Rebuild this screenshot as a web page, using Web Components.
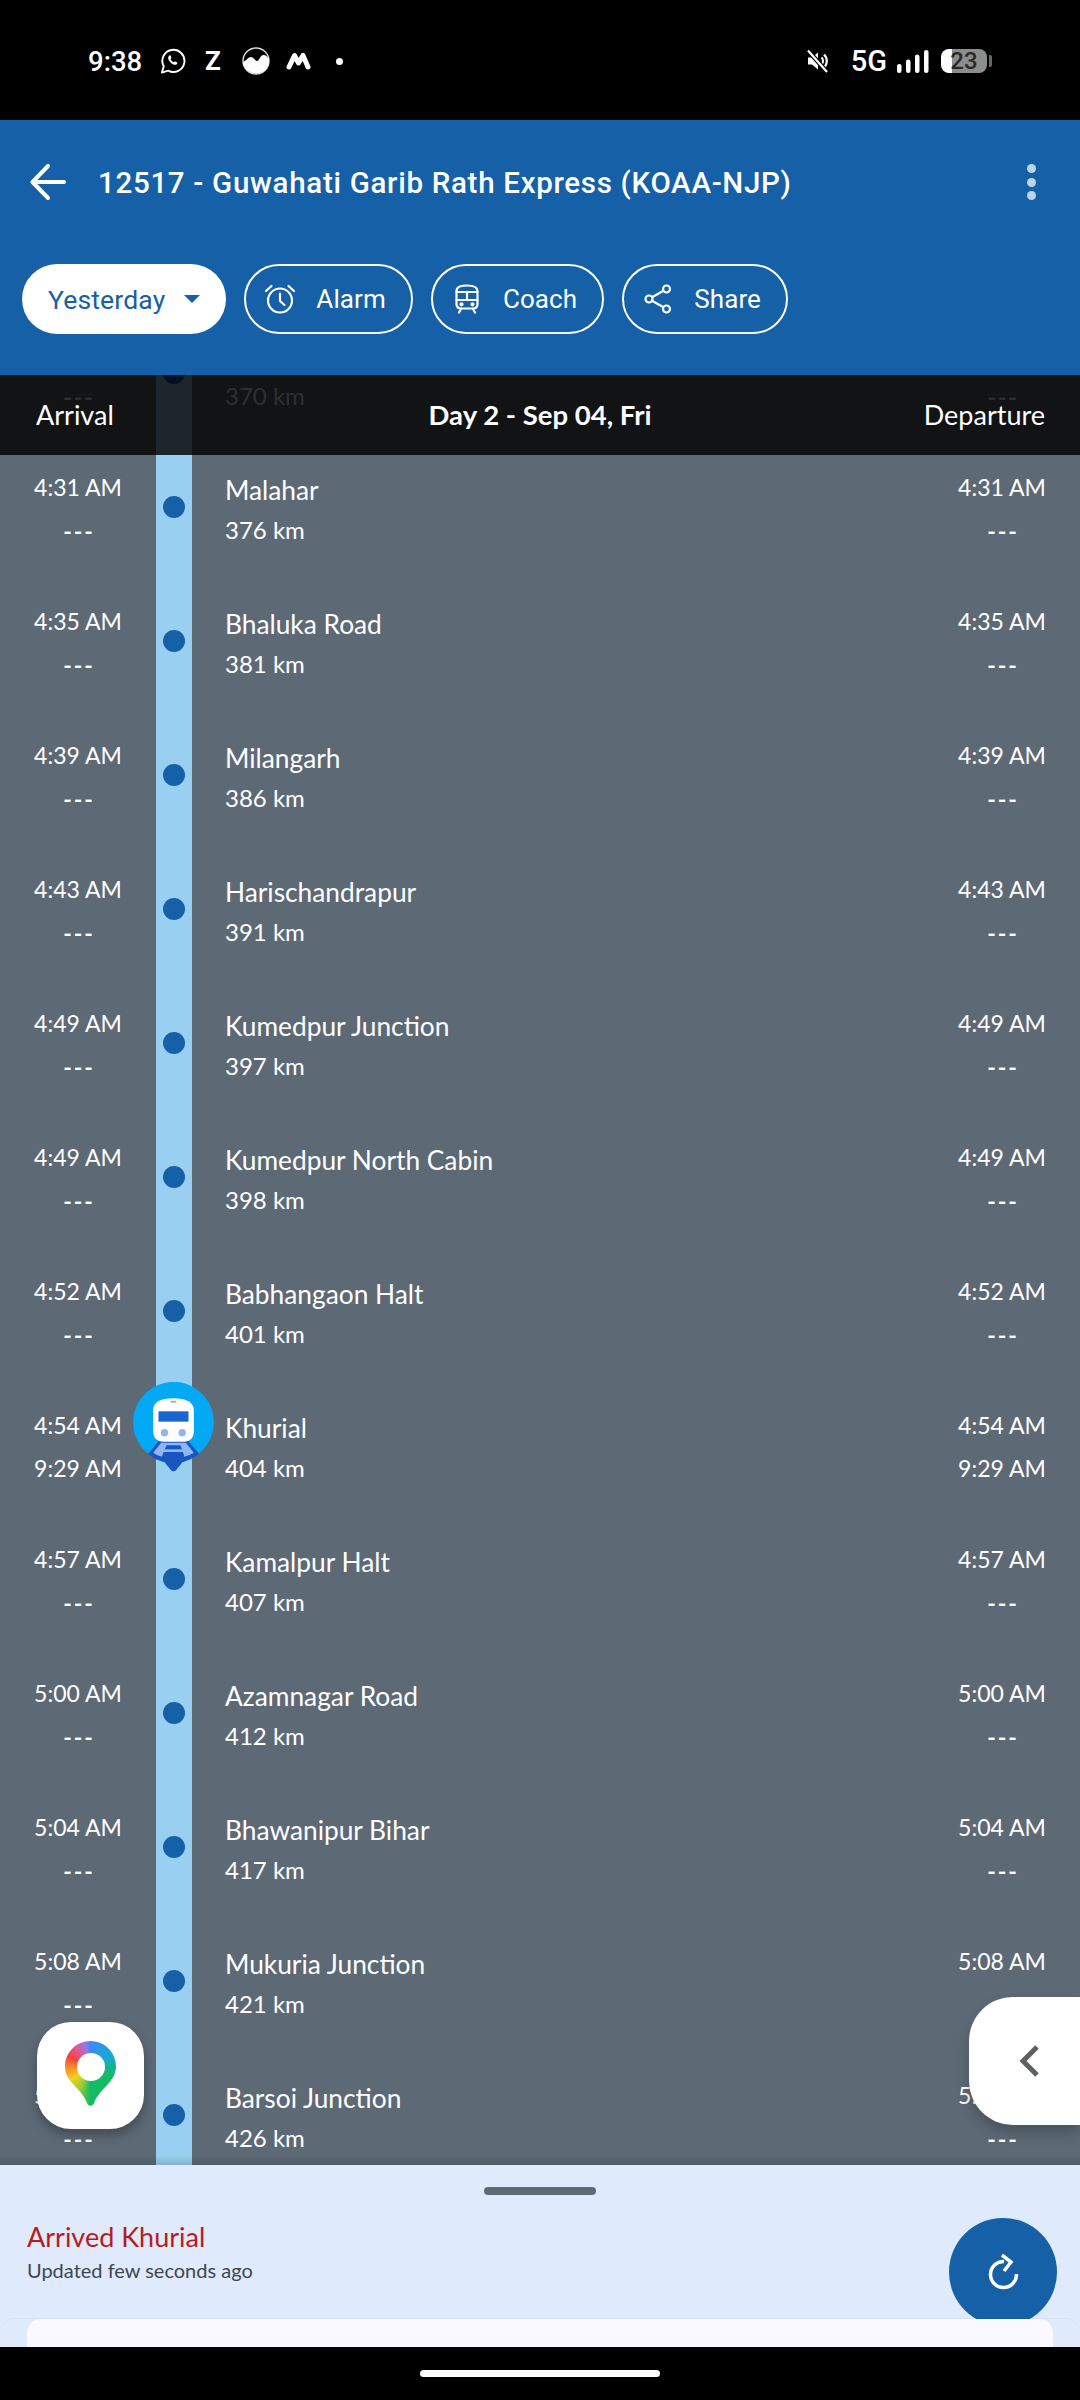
<!DOCTYPE html>
<html>
<head>
<meta charset="utf-8">
<title>Train status</title>
<style>
  html, body { margin: 0; padding: 0; height: 100%; background: #000; }
  body {
    width: 1080px;
    height: 2400px;
    overflow: hidden;
    display: flex;
    flex-direction: column;
    font-family: "Lato", "Open Sans", sans-serif;
    color: #fff;
  }
</style>
</head>
<body>
<status-bar></status-bar>
<train-header title-text="12517 - Guwahati Garib Rath Express (KOAA-NJP)">
  <day-select>Yesterday</day-select>
  <header-chip icon="alarm">Alarm</header-chip>
  <header-chip icon="coach">Coach</header-chip>
  <header-chip icon="share">Share</header-chip>
</train-header>
<route-view>
  <stop-row km="370 km"></stop-row>
  <stop-row time="4:31 AM" name="Malahar" km="376 km"></stop-row>
  <stop-row time="4:35 AM" name="Bhaluka Road" km="381 km"></stop-row>
  <stop-row time="4:39 AM" name="Milangarh" km="386 km"></stop-row>
  <stop-row time="4:43 AM" name="Harischandrapur" km="391 km"></stop-row>
  <stop-row time="4:49 AM" name="Kumedpur Junction" km="397 km"></stop-row>
  <stop-row time="4:49 AM" name="Kumedpur North Cabin" km="398 km"></stop-row>
  <stop-row time="4:52 AM" name="Babhangaon Halt" km="401 km"></stop-row>
  <stop-row time="4:54 AM" actual="9:29 AM" name="Khurial" km="404 km" current></stop-row>
  <stop-row time="4:57 AM" name="Kamalpur Halt" km="407 km"></stop-row>
  <stop-row time="5:00 AM" name="Azamnagar Road" km="412 km"></stop-row>
  <stop-row time="5:04 AM" name="Bhawanipur Bihar" km="417 km"></stop-row>
  <stop-row time="5:08 AM" name="Mukuria Junction" km="421 km"></stop-row>
  <stop-row time="5:12 AM" name="Barsoi Junction" km="426 km"></stop-row>
</route-view>
<status-sheet heading="Arrived Khurial" note="Updated few seconds ago"></status-sheet>
<nav-bar></nav-bar>

<script>
const ICONS = {
  alarm: `<svg width="32" height="30" viewBox="0 0 32 30" fill="none" stroke="#fff" stroke-width="2.2" stroke-linecap="round" stroke-linejoin="round">
    <circle cx="16" cy="16.500" r="12"/><path d="M16 9.500v7.500l4.500 4"/><path d="M2 7 7.500 2M30 7 24.500 2"/></svg>`,
  coach: `<svg width="26" height="30" viewBox="0 0 26 30" fill="none" stroke="#fff" stroke-width="2.2" stroke-linecap="round" stroke-linejoin="round">
    <path d="M2.500 7c0-4 4-5.500 10.500-5.500S23.500 3 23.500 7v13c0 3-2 4.500-4.500 4.500H7c-2.500 0-4.500-1.500-4.500-4.500z"/><path d="M2.500 8h21M2.500 16h21M13 8v8"/><path d="M7 25 5 28.500M19 25l2 3.500"/>
    <circle cx="7.500" cy="20.300" r="1" fill="#fff"/><circle cx="18.500" cy="20.300" r="1" fill="#fff"/></svg>`,
  share: `<svg width="28" height="30" viewBox="0 0 28 30" fill="none" stroke="#fff" stroke-width="2.200">
    <circle cx="22.500" cy="5" r="3.500"/><circle cx="5" cy="15" r="3.500"/><circle cx="22.500" cy="25" r="3.500"/><path d="M8 13.300 19.500 6.700M8 16.700l11.500 6.600"/></svg>`
};

const STATUS_TEMPLATE = document.createElement('template');

STATUS_TEMPLATE.innerHTML = `
  <style>
    :host {
      display: flex;
      align-items: center;
      flex: none;
      height: 120px;
      padding: 2px 88px 0 88px;
      box-sizing: border-box;
      background: #000;
      color: #fff;
      font-family: "Roboto", sans-serif;
      font-weight: 500;
    }
    .side { display: flex; align-items: center; }
    .left { flex: 1; }
    .time { font-size: 27.500px; width: 72px; }
    .z { font-size: 26px; width: 37px; margin-left: 19px; font-weight: 700; }
    .dot { width: 7px; height: 7px; border-radius: 50%; background: #fff; margin-left: 25px; }
    .five { font-size: 29px; margin: 0 10px 0 21px; }
    .battery { display: flex; align-items: center; gap: 2px; margin-left: 12px; }
    .cell {
      width: 46px;
      height: 24px;
      border-radius: 8px;
      background: linear-gradient(90deg, #fff 0 11px, #8d8d8d 11px);
      color: #2a2a2a;
      font-size: 24px;
      line-height: 24px;
      text-align: center;
    }
    .nub { width: 3px; height: 12px; border-radius: 0 2px 2px 0; background: #666; }
    svg { display: block; }
  </style>
  <div class="side left">
    <span class="time">9:38</span>
    <svg width="26" height="26" viewBox="0 0 27 27" fill="none" stroke="#fff" stroke-width="2">
      <path d="M2 25.500l1.900-6.500A11.500 11.500 0 1 1 8.500 23.500z" stroke-linejoin="round"/>
      <path d="M9.500 8c-1.800 1.500-1.200 4 1 6.500s5 3.800 6.800 2.500c.8-.6.800-1.600.5-2l-2.300-1.200-1.200 1.200c-1.200-.4-3-2.200-3.400-3.500l1.100-1.200-1.100-2.400c-.5-.4-1.100-.3-1.400.1z" fill="#fff" stroke="none"/>
    </svg>
    <span class="z">Z</span>
    <svg width="28" height="28" viewBox="0 0 28 28" style="margin-right:16px">
      <circle cx="14" cy="14" r="13" fill="#000" stroke="#ddd" stroke-width="1.400"/>
      <path d="M1 15c3-1 5-5 8-5s4 4 6 4 3-5 6-6c2-.5 4 1 6 4A13 13 0 0 1 1 15z" fill="#fff"/>
    </svg>
    <svg width="25" height="18" viewBox="0 0 25 18" fill="none" stroke="#fff" stroke-linecap="round" stroke-linejoin="round">
      <path d="M3 15 8.500 3.500 12.500 11 17 3.500 22 15" stroke-width="5"/>
    </svg>
    <span class="dot"></span>
  </div>
  <div class="side">
    <svg width="24" height="24" viewBox="0 0 24 24" fill="none">
      <path d="M2 8.500h4l6-5v17l-6-5H2z" fill="#fff"/>
      <path d="M15.500 8.500a5 5 0 0 1 0 7M18 5.500a9 9 0 0 1 0 13" stroke="#fff" stroke-width="2.200"/>
      <path d="M2 1.500 21 23" stroke="#000" stroke-width="4.500"/><path d="M2 1.500 21 23" stroke="#fff" stroke-width="2.200"/>
    </svg>
    <span class="five">5G</span>
    <svg width="32" height="23" viewBox="0 0 32 23" fill="#fff">
      <rect x="0" y="14" width="4.500" height="9" rx="2.250"/><rect x="9" y="9.500" width="4.500" height="13.500" rx="2.250"/>
      <rect x="18" y="4.500" width="4.500" height="18.500" rx="2.250"/><rect x="27" y="0" width="4.500" height="23" rx="2.250"/>
    </svg>
    <span class="battery"><span class="cell">23</span><span class="nub"></span></span>
  </div>
`;

class StatusBar extends HTMLElement {
  constructor() {
    super();
    this.attachShadow({ mode: 'open' }).append(STATUS_TEMPLATE.content.cloneNode(true));
  }
}

const HEADER_TEMPLATE = document.createElement('template');

HEADER_TEMPLATE.innerHTML = `
  <style>
    :host {
      display: block;
      flex: none;
      height: 255px;
      background: #1560a6;
      color: #fff;
      font-family: "Roboto", sans-serif;
    }
    .top {
      display: flex;
      align-items: center;
      height: 124px;
      padding: 0 44px 0 30px;
      box-sizing: border-box;
    }
    .title {
      flex: 1;
      margin: 2px 0 0 32px;
      font-size: 29.500px;
      font-weight: 500;
      letter-spacing: .7px;
      white-space: nowrap;
    }
    .more { display: flex; flex-direction: column; gap: 4.500px; }
    .more i { width: 9px; height: 9px; border-radius: 50%; background: #bdd4e8; }
    .chips { display: flex; gap: 18px; padding: 20px 22px 0; }
    svg { display: block; }
  </style>
  <div class="top">
    <svg width="36" height="36" viewBox="0 0 36 36" fill="none" stroke="#fff" stroke-width="4" stroke-linecap="round" stroke-linejoin="round">
      <path d="M34 18H3M18 2 2.500 18 18 34"/>
    </svg>
    <div class="title"></div>
    <div class="more"><i></i><i></i><i></i></div>
  </div>
  <div class="chips"><slot></slot></div>
`;

class TrainHeader extends HTMLElement {
  constructor() {
    super();
    this.attachShadow({ mode: 'open' }).append(HEADER_TEMPLATE.content.cloneNode(true));
  }

  connectedCallback() {
    this.shadowRoot.querySelector('.title').textContent = this.getAttribute('title-text');
  }
}

const SELECT_TEMPLATE = document.createElement('template');

SELECT_TEMPLATE.innerHTML = `
  <style>
    :host {
      display: flex;
      align-items: center;
      gap: 19px;
      height: 70px;
      padding: 0 26px;
      border-radius: 35px;
      background: #fff;
      color: #1560a6;
      font-size: 26.500px;
      letter-spacing: .15px;
    }
    .caret {
      width: 0;
      height: 0;
      border-left: 8px solid transparent;
      border-right: 8px solid transparent;
      border-top: 8px solid #1560a6;
    }
  </style>
  <slot></slot><span class="caret"></span>
`;

class DaySelect extends HTMLElement {
  constructor() {
    super();
    this.attachShadow({ mode: 'open' }).append(SELECT_TEMPLATE.content.cloneNode(true));
  }
}

const CHIP_TEMPLATE = document.createElement('template');

CHIP_TEMPLATE.innerHTML = `
  <style>
    :host {
      display: flex;
      align-items: center;
      gap: 20px;
      height: 70px;
      padding: 0 25px 0 18px;
      box-sizing: border-box;
      border: 2px solid #fff;
      border-radius: 35px;
      color: #fff;
      font-size: 26px;
      letter-spacing: .1px;
    }
    .icon { display: flex; justify-content: center; width: 32px; }
  </style>
  <span class="icon"></span><slot></slot>
`;

class HeaderChip extends HTMLElement {
  constructor() {
    super();
    this.attachShadow({ mode: 'open' }).append(CHIP_TEMPLATE.content.cloneNode(true));
  }

  connectedCallback() {
    this.shadowRoot.querySelector('.icon').innerHTML = ICONS[this.getAttribute('icon')];
  }
}

const ROUTE_TEMPLATE = document.createElement('template');

ROUTE_TEMPLATE.innerHTML = `
  <style>
    :host {
      display: block;
      flex: 1;
      min-height: 0;
      position: relative;
      overflow: hidden;
      background: #5d6a76;
    }
    .list { margin-top: -54px; }
    .columns {
      position: absolute;
      top: 0;
      left: 0;
      right: 0;
      height: 80px;
      padding-bottom: 2px;
      box-sizing: border-box;
      display: flex;
      align-items: center;
      justify-content: space-between;
      padding-left: 36px;
      padding-right: 35px;
      background: rgb(0 0 0 / 82%);
      color: #fff;
      font-size: 27px;
    }
    .day {
      position: absolute;
      left: 0;
      right: 0;
      text-align: center;
      font-weight: 700;
      font-size: 27.500px;
    }
    .shade {
      position: absolute;
      left: 0;
      right: 0;
      bottom: 0;
      height: 10px;
      background: linear-gradient(rgb(0 0 0 / 0%), rgb(0 0 0 / 14%));
    }
    maps-button, side-tab { position: absolute; }
    maps-button { left: 37px; bottom: 36px; }
    side-tab { right: 0; bottom: 40px; }
  </style>
  <div class="list"><slot></slot></div>
  <div class="columns">
    <span>Arrival</span>
    <span class="day">Day 2 - Sep 04, Fri</span>
    <span>Departure</span>
  </div>
  <div class="shade"></div>
  <maps-button></maps-button>
  <side-tab></side-tab>
`;

class RouteView extends HTMLElement {
  constructor() {
    super();
    this.attachShadow({ mode: 'open' }).append(ROUTE_TEMPLATE.content.cloneNode(true));
  }
}

const ROW_TEMPLATE = document.createElement('template');

ROW_TEMPLATE.innerHTML = `
  <style>
    :host {
      display: grid;
      grid-template-columns: 156px 36px 1fr 156px;
      height: 134px;
      color: #fff;
    }
    .times {
      display: flex;
      flex-direction: column;
      align-items: center;
      gap: 15px;
      padding-top: 18px;
      font-size: 23px;
      line-height: 28px;
    }
    .t { min-height: 28px; }
    .rail { position: relative; background: #99cff0; }
    .dot {
      position: absolute;
      left: 7px;
      top: 41px;
      width: 22px;
      height: 22px;
      border-radius: 50%;
      background: #1560a6;
    }
    .pin { position: absolute; left: -23px; top: -11px; z-index: 1; display: none; }
    :host([current]) .pin { display: block; }
    :host([current]) .dot { display: none; }
    .stop { padding: 18px 0 0 33px; }
    .name { min-height: 34px; font-size: 26.300px; line-height: 34px; }
    .km { font-size: 24px; line-height: 28px; margin-top: 9px; }
    .none { letter-spacing: 2px; font-weight: 700; margin-right: -2px; padding-top: 1px; }
  </style>
  <div class="times"><span class="t"></span><span class="a"></span></div>
  <div class="rail">
    <span class="dot"></span>
    <svg class="pin" width="81" height="90" viewBox="100 66 242 270">
      <path d="M100 187a121 121 0 1 1 198 93c-18 14-36 22-50 26l-20 25c-4 4-10 4-14 0l-20-25c-16-4-34-12-50-26a121 121 0 0 1-44-93z" fill="#03a9f4"/>
      <path d="M145 282l32-40h88l33 40c-22 16-42 22-50 24l-20 25c-4 4-10 4-14 0l-20-25c-10-2-30-8-49-24z" fill="#1a56c0"/>
      <path d="M160 278l24-30h74l24 30c-10 6-20 9-28 12l-12-34h-42l-14 34c-8-3-18-6-26-12z" fill="#8fb5f2"/>
      <path d="M188 268h66v8h-66z" fill="#8fb5f2"/>
      <path d="M160 150c0-22 20-35 60-35s62 13 62 35v64c0 20-12 31-30 31h-62c-18 0-30-11-30-31z" fill="#fff"/>
      <rect x="211" y="122" width="19" height="6" rx="3" fill="#8fb5f2"/>
      <rect x="176" y="154" width="90" height="31" fill="#1a66d0"/>
      <circle cx="194" cy="218" r="11" fill="#8fb5f2"/>
      <circle cx="247" cy="218" r="11" fill="#8fb5f2"/>
    </svg>
  </div>
  <div class="stop"><div class="name"></div><div class="km"></div></div>
  <div class="times"><span class="t"></span><span class="a"></span></div>
`;

class StopRow extends HTMLElement {
  constructor() {
    super();
    this.attachShadow({ mode: 'open' }).append(ROW_TEMPLATE.content.cloneNode(true));
  }

  connectedCallback() {
    const root = this.shadowRoot;
    const actual = this.getAttribute('actual');

    root.querySelectorAll('.t').forEach((el)=>el.textContent = this.getAttribute('time') || '');
    root.querySelectorAll('.a').forEach((el)=> {
      el.textContent = actual || '---';
      el.classList.toggle('none', !actual);
    });
    root.querySelector('.name').textContent = this.getAttribute('name') || '';
    root.querySelector('.km').textContent = this.getAttribute('km');
  }
}

const MAPS_TEMPLATE = document.createElement('template');

MAPS_TEMPLATE.innerHTML = `
  <style>
    :host {
      display: flex;
      align-items: center;
      justify-content: center;
      width: 107px;
      height: 107px;
      border-radius: 34px;
      background: #fff;
      box-shadow: 0 6px 12px rgb(0 0 0 / 30%);
    }
    .pin {
      position: relative;
      width: 51px;
      height: 66px;
      margin-bottom: 3px;
      background: conic-gradient(from 0deg at 50% 39%,
        #3f88f8 0deg, #17a9d0 60deg, #13bb62 115deg, #13bb62 180deg,
        #9ccb3a 205deg, #f0d21e 235deg, #f59a22 262deg, #f2443f 295deg,
        #e0589a 325deg, #8f7af0 348deg, #3f88f8 360deg);
      clip-path: path('M25.500 0C39.600 0 51 11.400 51 25.500C51 33 47 38.500 43 43C37 49.500 31.500 55 29 62C28 65.500 23 65.500 22 62C19.500 55 14 49.500 8 43C4 38.500 0 33 0 25.500C0 11.400 11.400 0 25.500 0Z');
    }
    .hole {
      position: absolute;
      left: 11.500px;
      top: 11.500px;
      width: 28px;
      height: 28px;
      border-radius: 50%;
      background: #fff;
    }
  </style>
  <div class="pin"><div class="hole"></div></div>
`;

class MapsButton extends HTMLElement {
  constructor() {
    super();
    this.attachShadow({ mode: 'open' }).append(MAPS_TEMPLATE.content.cloneNode(true));
  }
}

const TAB_TEMPLATE = document.createElement('template');

TAB_TEMPLATE.innerHTML = `
  <style>
    :host {
      display: flex;
      align-items: center;
      width: 111px;
      height: 128px;
      padding-left: 49px;
      box-sizing: border-box;
      border-radius: 44px 0 0 44px;
      background: #fff;
      box-shadow: 0 8px 14px rgb(0 0 0 / 22%);
    }
  </style>
  <svg width="22" height="34" viewBox="0 0 22 34" fill="none" stroke="#5f6064" stroke-width="5">
    <path d="M19 3 5 17l14 14"/>
  </svg>
`;

class SideTab extends HTMLElement {
  constructor() {
    super();
    this.attachShadow({ mode: 'open' }).append(TAB_TEMPLATE.content.cloneNode(true));
  }
}

const SHEET_TEMPLATE = document.createElement('template');

SHEET_TEMPLATE.innerHTML = `
  <style>
    :host {
      display: block;
      position: relative;
      flex: none;
      height: 182px;
      overflow: hidden;
      background: #dfeafd;
    }
    .handle {
      width: 112px;
      height: 8px;
      margin: 22px auto 0;
      border-radius: 4px;
      background: #5d6a76;
    }
    .text { padding: 26px 27px 0; }
    .heading { font-size: 27px; line-height: 32px; color: #b71c1c; }
    .note { font-size: 20px; line-height: 26px; margin-top: 4px; color: #3f4650; }
    .fab {
      position: absolute;
      right: 23px;
      top: 53px;
      width: 108px;
      height: 108px;
      display: flex;
      align-items: center;
      justify-content: center;
      border-radius: 50%;
      background: #1560a6;
    }
    .tray {
      position: absolute;
      left: 0;
      right: 0;
      top: 153px;
      height: 40px;
      padding: 0 27px;
      border-top: 1px solid rgb(0 0 0 / 4%);
      border-radius: 14px 14px 0 0;
    }
    .card { height: 100%; border-radius: 14px 14px 0 0; background: #f9f9ff; }
  </style>
  <div class="handle"></div>
  <div class="text">
    <div class="heading"></div>
    <div class="note"></div>
  </div>
  <div class="fab">
    <svg width="32" height="36" viewBox="0 0 32 36" fill="none" stroke="#fff" stroke-width="3.500">
      <path d="M17 7.500A13 13 0 1 0 29.500 20"/><path d="M15 1l9 7-7 9" stroke-linejoin="miter"/>
    </svg>
  </div>
  <div class="tray"><div class="card"></div></div>
`;

class StatusSheet extends HTMLElement {
  constructor() {
    super();
    this.attachShadow({ mode: 'open' }).append(SHEET_TEMPLATE.content.cloneNode(true));
  }

  connectedCallback() {
    this.shadowRoot.querySelector('.heading').textContent = this.getAttribute('heading');
    this.shadowRoot.querySelector('.note').textContent = this.getAttribute('note');
  }
}

const NAV_TEMPLATE = document.createElement('template');

NAV_TEMPLATE.innerHTML = `
  <style>
    :host {
      display: flex;
      align-items: center;
      justify-content: center;
      flex: none;
      height: 53px;
      background: #000;
    }
    span { width: 240px; height: 7px; border-radius: 4px; background: #fff; }
  </style>
  <span></span>
`;

class NavBar extends HTMLElement {
  constructor() {
    super();
    this.attachShadow({ mode: 'open' }).append(NAV_TEMPLATE.content.cloneNode(true));
  }
}

customElements.define('status-bar', StatusBar);
customElements.define('train-header', TrainHeader);
customElements.define('day-select', DaySelect);
customElements.define('header-chip', HeaderChip);
customElements.define('route-view', RouteView);
customElements.define('stop-row', StopRow);
customElements.define('maps-button', MapsButton);
customElements.define('side-tab', SideTab);
customElements.define('status-sheet', StatusSheet);
customElements.define('nav-bar', NavBar);
</script>
</body>
</html>
